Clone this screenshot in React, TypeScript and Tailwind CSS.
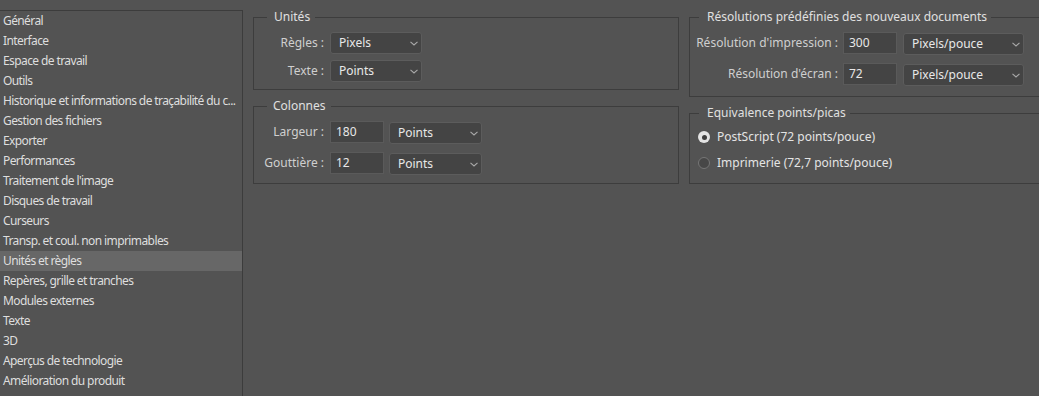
import React from "react";

const items = [
  "Général",
  "Interface",
  "Espace de travail",
  "Outils",
  "Historique et informations de traçabilité du c...",
  "Gestion des fichiers",
  "Exporter",
  "Performances",
  "Traitement de l'image",
  "Disques de travail",
  "Curseurs",
  "Transp. et coul. non imprimables",
  "Unités et règles",
  "Repères, grille et tranches",
  "Modules externes",
  "Texte",
  "3D",
  "Aperçus de technologie",
  "Amélioration du produit",
];

function Chevron() {
  return (
    <svg width="8" height="5" viewBox="0 0 8 5" className="shrink-0">
      <path d="M0.5 0.8 L4 4 L7.5 0.8" fill="none" stroke="#a9a9a9" strokeWidth="1.1" />
    </svg>
  );
}

function Select({ value, w, className = "" }: { value: string; w: string; className?: string }) {
  return (
    <div
      className={`${w} ${className} h-[22px] flex items-center justify-between rounded-[3px] border border-[#5c5c5c] bg-[#444444] pl-[8px] pr-[3px] text-[#e8e8e8]`}
    >
      <span>{value}</span>
      <Chevron />
    </div>
  );
}

function Input({ value }: { value: string }) {
  return (
    <div className="w-[54px] h-[22px] flex items-center border border-[#5a5a5a] bg-[#444444] pl-[5px] text-[#e8e8e8]">
      {value}
    </div>
  );
}

export default function App() {
  return (
    <div
      className="w-[1039px] h-[396px] overflow-hidden bg-[#535353] flex text-[12px] text-[#dedede]"
      style={{ fontFamily: '"Noto Sans", "DejaVu Sans", sans-serif' }}
    >
      <div className="mt-[10px] w-[243px] shrink-0 border-t border-r border-[#3c3c3c]">
        {items.map((t) => (
          <div
            key={t}
            className={`h-[20px] leading-[20px] pl-[3px] whitespace-nowrap overflow-hidden tracking-[-0.6px] ${
              t === "Unités et règles" ? "bg-[#676767]" : ""
            }`}
          >
            {t}
          </div>
        ))}
      </div>

      <div className="flex gap-[10px] ml-[10px] pt-[9px] items-start">
        <div className="w-[426px] shrink-0 flex flex-col">
          <fieldset className="border border-[#3d3d3d] m-0 p-0 pb-[7px] min-w-0">
            <legend className="ml-[13px] pl-[7px] pr-[5px] leading-[16px] text-[#e0e0e0]">Unités</legend>
            <div className="flex flex-col gap-[6px] pt-[7px]">
              <div className="flex items-center h-[22px]">
                <div className="w-[70px] text-right text-[#cfcfcf]">Règles :</div>
                <Select value="Pixels" w="w-[92px]" className="ml-[6px]" />
              </div>
              <div className="flex items-center h-[22px]">
                <div className="w-[70px] text-right text-[#cfcfcf]">Texte :</div>
                <Select value="Points" w="w-[92px]" className="ml-[6px]" />
              </div>
            </div>
          </fieldset>

          <fieldset className="mt-[8px] border border-[#3d3d3d] m-0 p-0 pb-[8px] min-w-0">
            <legend className="ml-[13px] pl-[6px] pr-[5px] leading-[16px] text-[#e0e0e0]">Colonnes</legend>
            <div className="flex flex-col gap-[8px] pt-[7px]">
              <div className="flex items-start h-[23px]">
                <div className="w-[70px] h-[22px] leading-[22px] text-right text-[#cfcfcf]">Largeur :</div>
                <div className="ml-[6px]">
                  <Input value="180" />
                </div>
                <Select value="Points" w="w-[93px]" className="ml-[5px] mt-[1px]" />
              </div>
              <div className="flex items-start h-[23px]">
                <div className="w-[70px] h-[22px] leading-[22px] text-right text-[#cfcfcf]">Gouttière :</div>
                <div className="ml-[6px]">
                  <Input value="12" />
                </div>
                <Select value="Points" w="w-[93px]" className="ml-[5px] mt-[1px]" />
              </div>
            </div>
          </fieldset>
        </div>

        <div className="w-[380px] shrink-0 flex flex-col">
          <fieldset className="border border-[#3d3d3d] m-0 p-0 pb-[10px] min-w-0">
            <legend className="ml-[9px] pl-[8px] pr-[4px] leading-[16px] text-[#e0e0e0]">
              Résolutions prédéfinies des nouveaux documents
            </legend>
            <div className="flex flex-col gap-[8px] pt-[7px]">
              <div className="flex items-start h-[23px]">
                <div className="w-[148px] h-[22px] leading-[22px] text-right text-[#cfcfcf]">Résolution d'impression :</div>
                <div className="ml-[5px]">
                  <Input value="300" />
                </div>
                <Select value="Pixels/pouce" w="w-[121px]" className="ml-[6px] mt-[1px]" />
              </div>
              <div className="flex items-start h-[23px]">
                <div className="w-[148px] h-[22px] leading-[22px] text-right text-[#cfcfcf]">Résolution d'écran :</div>
                <div className="ml-[5px]">
                  <Input value="72" />
                </div>
                <Select value="Pixels/pouce" w="w-[121px]" className="ml-[6px] mt-[1px]" />
              </div>
            </div>
          </fieldset>

          <fieldset className="mt-[8px] border border-[#3d3d3d] m-0 p-0 pb-[10px] min-w-0">
            <legend className="ml-[9px] pl-[8px] pr-[4px] leading-[16px] text-[#e0e0e0]">Equivalence points/picas</legend>
            <div className="flex flex-col gap-[6px] pt-[6px]">
              <div className="flex items-center h-[20px] pl-[8px] gap-[7px]">
                <div className="w-[12px] h-[12px] rounded-full bg-[#e4e4e4] flex items-center justify-center">
                  <div className="w-[5px] h-[5px] rounded-full bg-[#3e3e3e]" />
                </div>
                <span className="text-[#e4e4e4]">PostScript (72 points/pouce)</span>
              </div>
              <div className="flex items-center h-[20px] pl-[8px] gap-[7px]">
                <div className="w-[12px] h-[12px] rounded-full bg-[#474747] border border-[#767676]" />
                <span className="text-[#e4e4e4]">Imprimerie (72,7 points/pouce)</span>
              </div>
            </div>
          </fieldset>
        </div>
      </div>
    </div>
  );
}
